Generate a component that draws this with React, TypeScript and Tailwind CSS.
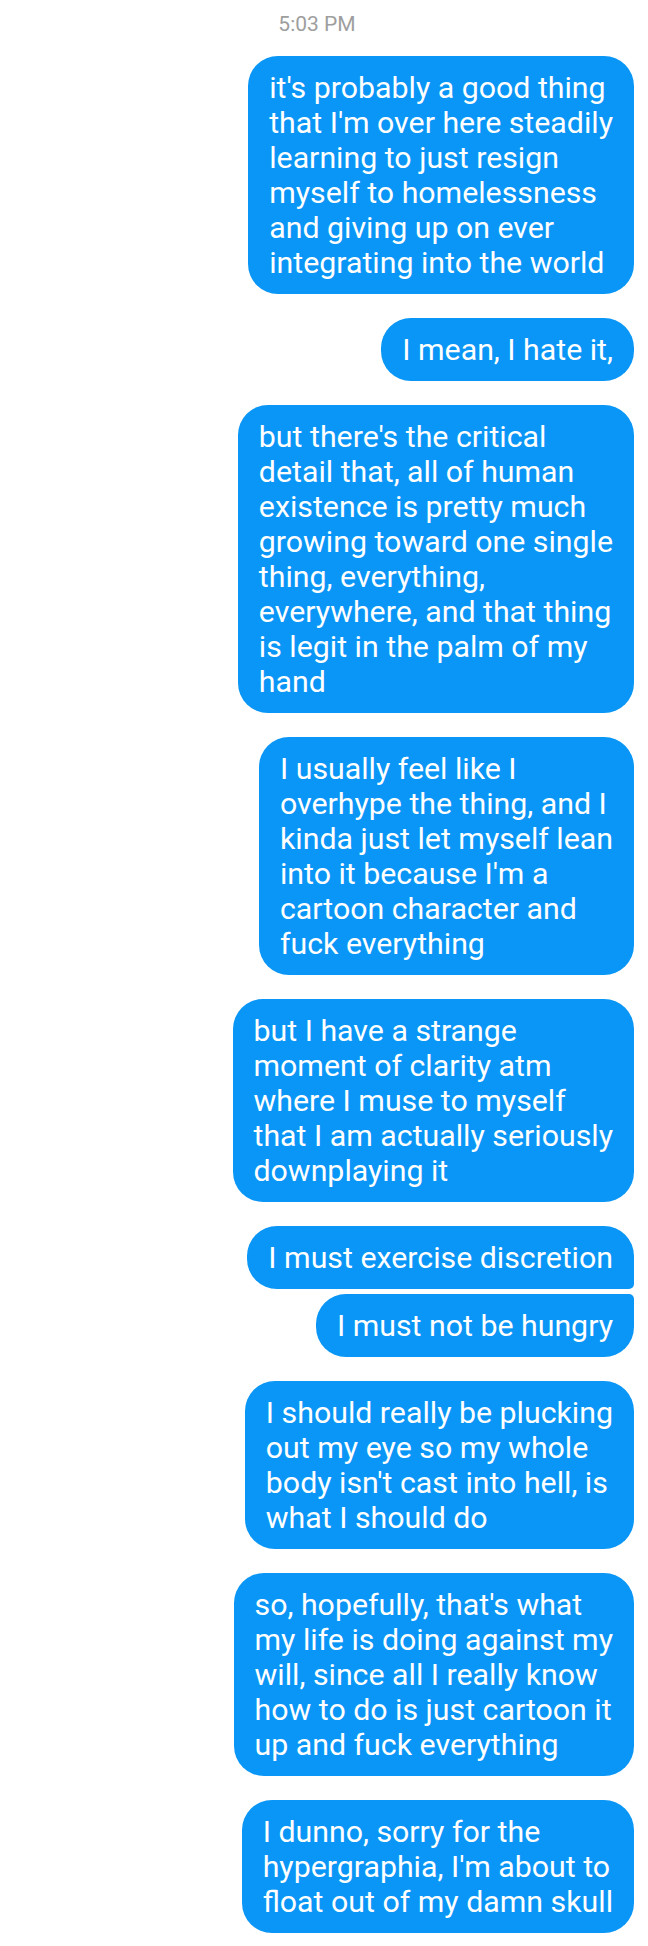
const messages: { lines: string[]; group?: 'top' | 'bottom' }[] = [
  {
    lines: [
      "it's probably a good thing",
      "that I'm over here steadily",
      'learning to just resign',
      'myself to homelessness',
      'and giving up on ever',
      'integrating into the world',
    ],
  },
  { lines: ['I mean, I hate it,'] },
  {
    lines: [
      "but there's the critical",
      'detail that, all of human',
      'existence is pretty much',
      'growing toward one single',
      'thing, everything,',
      'everywhere, and that thing',
      'is legit in the palm of my',
      'hand',
    ],
  },
  {
    lines: [
      'I usually feel like I',
      'overhype the thing, and I',
      'kinda just let myself lean',
      "into it because I'm a",
      'cartoon character and',
      'fuck everything',
    ],
  },
  {
    lines: [
      'but I have a strange',
      'moment of clarity atm',
      'where I muse to myself',
      'that I am actually seriously',
      'downplaying it',
    ],
  },
  { lines: ['I must exercise discretion'], group: 'top' },
  { lines: ['I must not be hungry'], group: 'bottom' },
  {
    lines: [
      'I should really be plucking',
      'out my eye so my whole',
      "body isn't cast into hell, is",
      'what I should do',
    ],
  },
  {
    lines: [
      "so, hopefully, that's what",
      'my life is doing against my',
      'will, since all I really know',
      'how to do is just cartoon it',
      'up and fuck everything',
    ],
  },
  {
    lines: [
      'I dunno, sorry for the',
      "hypergraphia, I'm about to",
      'float out of my damn skull',
    ],
  },
]

function Bubble({ lines, group }: { lines: string[]; group?: 'top' | 'bottom' }) {
  let corners = 'rounded-[30px]'
  if (group === 'top') corners = 'rounded-[30px] rounded-br-[5px]'
  if (group === 'bottom') corners = 'rounded-[30px] rounded-tr-[5px]'

  return (
    <div
      className={`bg-[#0a96f6] text-white px-[21px] pt-[14px] pb-[14px] text-[30.3px] leading-[35px] ${corners}`}
    >
      {lines.map((line, i) => (
        <div key={i} className="whitespace-nowrap">
          {line}
        </div>
      ))}
    </div>
  )
}

export default function App() {
  return (
    <div
      className="w-[648px] min-h-[1946px] bg-white pt-[12px] pr-[14px]"
      style={{ fontFamily: 'Roboto, "Noto Sans", sans-serif' }}
    >
      <div className="text-center text-[21px] leading-[25px] text-[#9e9e9e]">5:03 PM</div>
      <div className="flex flex-col items-end mt-[19px]">
        {messages.map((m, i) => (
          <div
            key={i}
            className={i === 0 ? '' : m.group === 'bottom' ? 'mt-[5px]' : 'mt-[24px]'}
          >
            <Bubble lines={m.lines} group={m.group} />
          </div>
        ))}
      </div>
    </div>
  )
}
